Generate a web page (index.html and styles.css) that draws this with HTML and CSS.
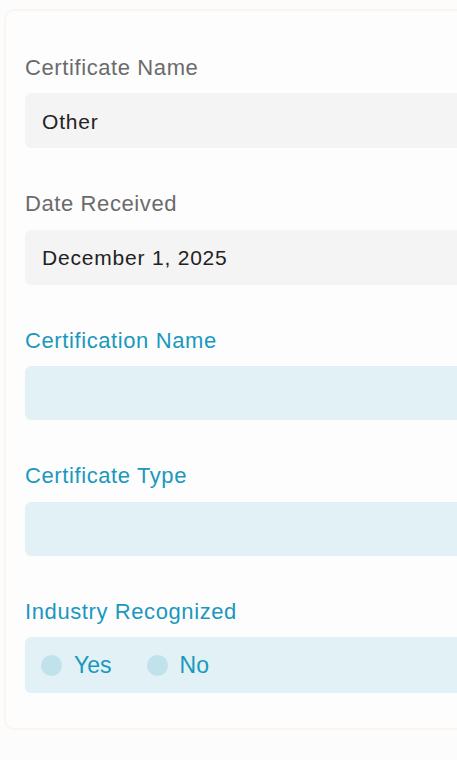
FILE: index.html
```html
<!DOCTYPE html>
<html lang="en">
<head>
<meta charset="utf-8">
<title>Certificate</title>
<link rel="stylesheet" href="styles.css">
</head>
<body>
<div class="page">
  <form class="card">
    <div class="field">
      <div class="label">Certificate Name</div>
      <div class="input input-readonly">Other</div>
    </div>
    <div class="field">
      <div class="label">Date Received</div>
      <div class="input input-readonly">December 1, 2025</div>
    </div>
    <div class="field">
      <div class="label label-active">Certification Name</div>
      <div class="input input-active"></div>
    </div>
    <div class="field">
      <div class="label label-active">Certificate Type</div>
      <div class="input input-active"></div>
    </div>
    <div class="field">
      <div class="label label-active">Industry Recognized</div>
      <div class="input input-active radio-group">
        <span class="radio"><span class="dot"></span>Yes</span>
        <span class="radio"><span class="dot"></span>No</span>
      </div>
    </div>
  </form>
</div>
</body>
</html>
```

FILE: styles.css
```css
html, body {
  margin: 0;
  padding: 0;
  background: #fcfcfc;
  overflow: hidden;
  font-family: "Liberation Sans", Arial, sans-serif;
}

.page {
  padding: 9px 0 0 4px;
  height: 760px;
  box-sizing: border-box;
}

.card {
  width: calc(100% + 40px);
  box-sizing: border-box;
  border: 2px solid #fcf4ee;
  border-radius: 10px;
  background: #fdfdfd;
  padding: 44.5px 0 35px 19px;
  display: flex;
  flex-direction: column;
  gap: 44px;
}

.field {
  display: flex;
  flex-direction: column;
}

.label {
  font-size: 22px;
  line-height: 24px;
  letter-spacing: 0.6px;
  color: #6b6b6b;
  margin-bottom: 13.5px;
}

.label-active {
  color: #1a98be;
}

.input {
  height: 55px;
  border-radius: 6px;
  padding: 0 17px;
  display: flex;
  align-items: center;
  font-size: 21px;
  line-height: 24px;
  letter-spacing: 0.8px;
  color: #222;
}

.input-readonly {
  background: #f4f4f4;
  padding-top: 2px;
  height: 53px;
}

.input-active {
  background: #e2f1f6;
  height: 54px;
}

.radio-group {
  height: 56px;
  padding-left: 16px;
  gap: 35px;
}

.radio {
  display: flex;
  align-items: center;
  gap: 12px;
  font-size: 23px;
  letter-spacing: 0;
  color: #1a98be;
}

.dot {
  width: 21px;
  height: 21px;
  border-radius: 50%;
  background: #c0e2eb;
}
```
